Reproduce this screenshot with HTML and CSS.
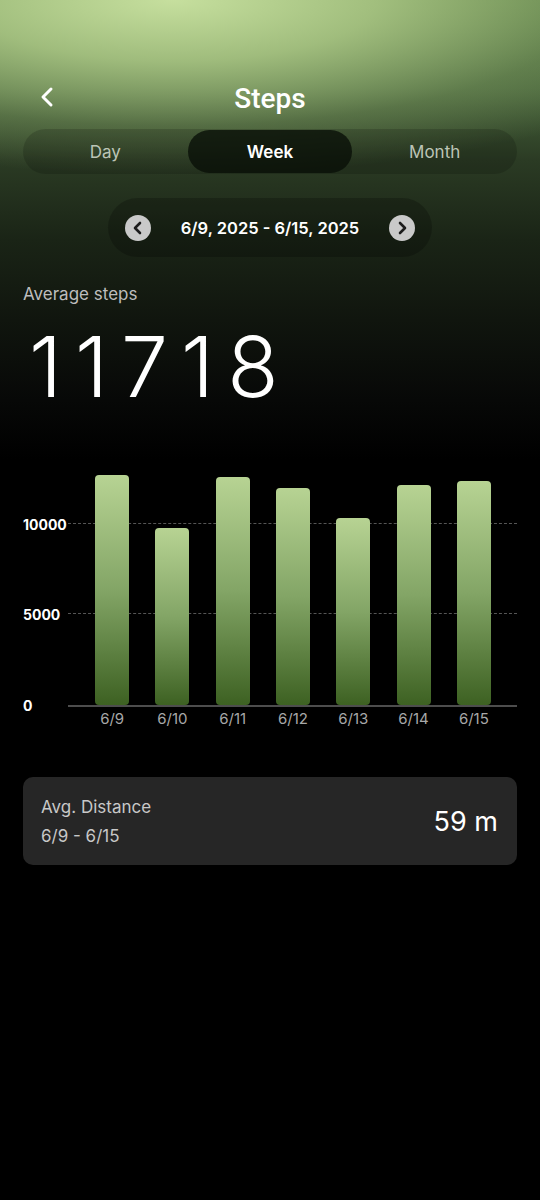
FILE: index.html
```html
<!DOCTYPE html>
<html lang="en">
<head>
    <meta charset="UTF-8" />
    <meta name="viewport" content="width=device-width, initial-scale=1" />
    <title>Steps</title>
    <link rel="stylesheet" href="styles.css">
</head>
<body>
<div class="page">
    <header class="topbar">
        <button class="btn-back" aria-label="Back">
            <svg width="18" height="22" viewBox="0 0 18 22"><path d="M13 3 L5 11 L13 19" fill="none" stroke="#fff" stroke-width="3" stroke-linecap="round" stroke-linejoin="round"/></svg>
        </button>
        <h1>Steps</h1>
    </header>

    <nav class="tabs">
        <span class="tab">Day</span>
        <span class="tab ativo">Week</span>
        <span class="tab">Month</span>
    </nav>

    <div class="periodo">
        <span class="seta">
            <svg width="26" height="26" viewBox="0 0 26 26"><path d="M15 8 L10 13 L15 18" fill="none" stroke="#1c1c1c" stroke-width="2.6" stroke-linecap="round" stroke-linejoin="round"/></svg>
        </span>
        <span class="periodo-texto">6/9, 2025 - 6/15, 2025</span>
        <span class="seta">
            <svg width="26" height="26" viewBox="0 0 26 26"><path d="M11 8 L16 13 L11 18" fill="none" stroke="#1c1c1c" stroke-width="2.6" stroke-linecap="round" stroke-linejoin="round"/></svg>
        </span>
    </div>

    <section class="resumo">
        <div class="resumo-label">Average steps</div>
        <div class="resumo-valor">11718</div>
    </section>

    <section class="grafico">
        <div class="eixo-y">
            <span style="bottom: 71.43%">10000</span>
            <span style="bottom: 35.71%">5000</span>
            <span style="bottom: 0%">0</span>
        </div>
        <div class="area">
            <div class="linha-grade" style="bottom: 71.43%"></div>
            <div class="linha-grade" style="bottom: 35.71%"></div>
            <div class="barras">
                <div class="coluna"><div class="barra" style="height: 90.6%"></div></div>
                <div class="coluna"><div class="barra" style="height: 69.8%"></div></div>
                <div class="coluna"><div class="barra" style="height: 89.9%"></div></div>
                <div class="coluna"><div class="barra" style="height: 85.6%"></div></div>
                <div class="coluna"><div class="barra" style="height: 73.8%"></div></div>
                <div class="coluna"><div class="barra" style="height: 86.8%"></div></div>
                <div class="coluna"><div class="barra" style="height: 88.0%"></div></div>
            </div>
        </div>
        <div></div>
        <div class="rotulos">
            <span>6/9</span>
            <span>6/10</span>
            <span>6/11</span>
            <span>6/12</span>
            <span>6/13</span>
            <span>6/14</span>
            <span>6/15</span>
        </div>
    </section>

    <section class="cartao">
        <div>
            <div class="cartao-titulo">Avg. Distance</div>
            <div class="cartao-sub">6/9 - 6/15</div>
        </div>
        <div class="cartao-valor">59 m</div>
    </section>
</div>
</body>
</html>
```

FILE: styles.css
```css
:root {
    --cor-texto: #fff;
    --cor-texto-secundario: #bdbdbd;
    --cor-cartao: #262626;
    --cor-grade: #4d4d4d;
    --barra-topo: #b7d393;
    --barra-base: #3d6122;
}

html, body {
    margin: 0;
    background: #000;
    font-family: 'Inter', 'Roboto', sans-serif;
    color: var(--cor-texto);
}

.page {
    min-height: 1200px;
    width: 540px;
    box-sizing: border-box;
    padding: 76px 23px 0;
    background:
        radial-gradient(ellipse 580px 175px at 32% 0%, rgba(198, 223, 158, 1) 0%, rgba(180, 208, 140, 0.8) 35%, rgba(150, 180, 115, 0.3) 72%, rgba(150, 180, 115, 0) 100%),
        linear-gradient(to bottom, #587a44 0px, #46623a 90px, #2b3b24 160px, #1a2416 240px, #10150e 320px, #070807 400px, #000 460px);
}

.topbar {
    position: relative;
    height: 44px;
    display: flex;
    align-items: center;
    justify-content: center;
}

.btn-back {
    position: absolute;
    left: 15px;
    top: 10px;
    background: none;
    border: none;
    padding: 0;
    display: flex;
}

h1 {
    margin: 0;
    font-family: 'Roboto', sans-serif;
    font-weight: 500;
    font-size: 28px;
}

.tabs {
    margin-top: 9px;
    height: 45px;
    border-radius: 23px;
    background: rgba(0, 0, 0, 0.16);
    display: grid;
    grid-template-columns: 1fr 1fr 1fr;
    padding: 1px 0;
    box-sizing: border-box;
}

.tab {
    display: flex;
    align-items: center;
    justify-content: center;
    font-size: 17px;
    color: #bcc4b6;
    border-radius: 22px;
}

.tab.ativo {
    background: rgba(8, 14, 6, 0.78);
    color: #fff;
    font-weight: 600;
}

.periodo {
    margin: 24px auto 0;
    width: 324px;
    height: 59px;
    border-radius: 30px;
    background: rgba(0, 0, 0, 0.22);
    display: flex;
    align-items: center;
    justify-content: space-between;
    padding: 0 17px;
    box-sizing: border-box;
}

.seta {
    width: 26px;
    height: 26px;
    border-radius: 50%;
    background: #c9c9c9;
    display: flex;
}

.periodo-texto {
    font-size: 16.5px;
    font-weight: 600;
}

.resumo {
    margin-top: 26px;
}

.resumo-label {
    font-size: 17px;
    line-height: 22px;
    color: var(--cor-texto-secundario);
}

.resumo-valor {
    margin-top: 20px;
    margin-left: 6px;
    font-size: 84px;
    font-weight: 300;
    line-height: 1;
    letter-spacing: 13px;
}

.grafico {
    margin-top: 42px;
    display: grid;
    grid-template-columns: 45px 1fr;
}

.eixo-y {
    position: relative;
    height: 254px;
}

.eixo-y span {
    position: absolute;
    left: 0;
    transform: translateY(50%);
    font-size: 14px;
    font-weight: 700;
}

.area {
    position: relative;
    height: 254px;
    border-bottom: 2px solid var(--cor-grade);
}

.linha-grade {
    position: absolute;
    left: 0;
    right: 0;
    border-top: 1px dashed #555;
}

.barras {
    position: relative;
    height: 100%;
    display: grid;
    grid-template-columns: repeat(7, 1fr);
    padding: 0 13px 0 14px;
}

.coluna {
    display: flex;
    align-items: flex-end;
    justify-content: center;
}

.barra {
    width: 34px;
    border-radius: 4px;
    background: linear-gradient(to bottom, var(--barra-topo), #83a566 50%, var(--barra-base));
}

.rotulos {
    display: grid;
    grid-template-columns: repeat(7, 1fr);
    padding: 3px 13px 0 14px;
}

.rotulos span {
    text-align: center;
    font-size: 15px;
    line-height: 18px;
    color: #a8a8a8;
}

.cartao {
    margin-top: 49px;
    height: 88px;
    border-radius: 10px;
    background: var(--cor-cartao);
    display: flex;
    align-items: center;
    justify-content: space-between;
    padding: 0 19px 0 18px;
    box-sizing: border-box;
}

.cartao-titulo,
.cartao-sub {
    font-size: 17px;
    line-height: 22px;
    color: #c8c8c8;
}

.cartao-sub {
    margin-top: 7px;
}

.cartao-valor {
    font-size: 27px;
}
```
